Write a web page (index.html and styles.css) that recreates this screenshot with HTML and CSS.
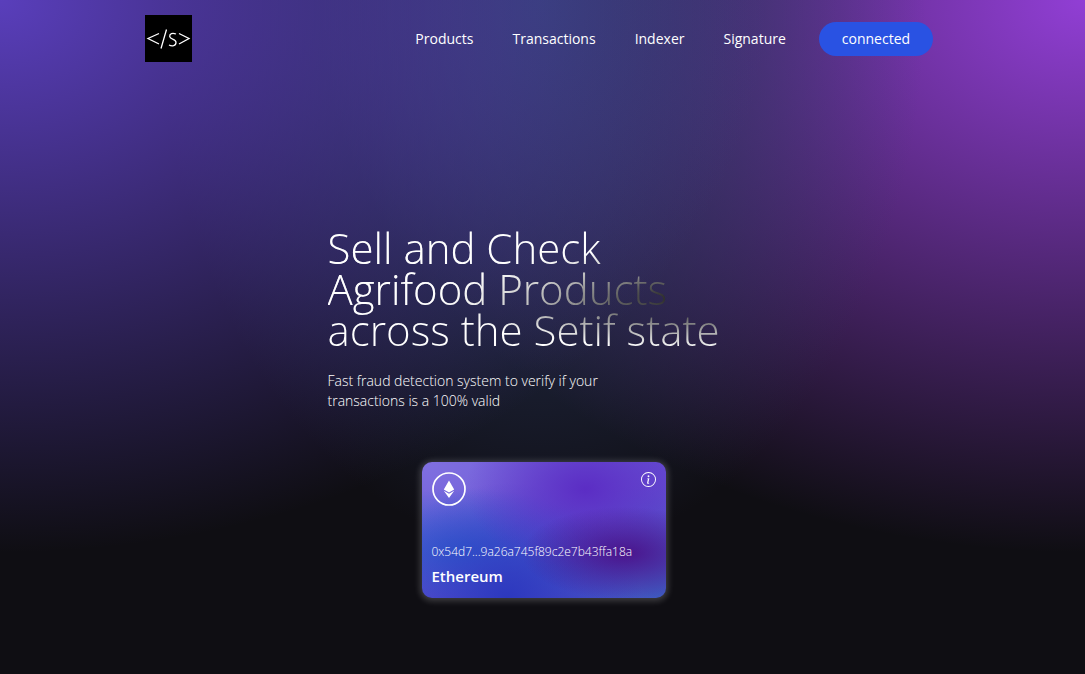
FILE: index.html
```html
<!DOCTYPE html>
<html lang="en">
<head>
  <meta charset="UTF-8" />
  <meta name="viewport" content="width=device-width, initial-scale=1.0"/>
  <title>Agrifood Products</title>
  <link rel="stylesheet" href="styles.css">
</head>
<body>
  <div class="welcome">
    <nav class="navbar">
      <a class="logo" href="#" aria-label="Home">
        <svg width="47" height="47" viewBox="0 0 47 47" fill="none" stroke="#fff" stroke-width="1.3">
          <rect width="47" height="47" fill="#000" stroke="none" />
          <path d="M14 18.500 3 23.500 14 29M21.500 14.500 16 33.500M34 18.500 44 23.500 34 29" />
          <path d="M31 19C27.500 17.500 24.500 18.500 24.700 21.500C25 25 31 23 31 27.500C31 31 27 31.500 24 30" />
        </svg>
      </a>
      <ul class="nav-links">
        <li><a href="#products">Products</a></li>
        <li><a href="#transactions">Transactions</a></li>
        <li><a href="#indexer">Indexer</a></li>
        <li><a href="#signature">Signature</a></li>
        <li><button class="connect-btn" type="button">connected</button></li>
      </ul>
    </nav>

    <main class="hero">
      <div class="hero-content">
        <h1 class="text-gradient">Sell and Check<br>Agrifood Products<br>across the Setif state</h1>
        <p class="intro">Fast fraud detection system to verify if your transactions is a 100% valid</p>

        <div class="eth-card">
          <div class="card-top">
            <svg width="34" height="34" viewBox="0 0 34 34" aria-hidden="true">
              <circle cx="17" cy="17" r="16" fill="none" stroke="#fff" stroke-width="1.700" />
              <path fill="#fff" d="M17 8.500 22.200 17.500 17 20.500 11.800 17.500ZM11.800 18.800 17 21.800 22.200 18.800 17 26Z" />
            </svg>
            <svg width="15" height="15" viewBox="0 0 16 16" fill="#fff" aria-hidden="true">
              <path d="M8 15A7 7 0 1 1 8 1a7 7 0 0 1 0 14zm0 1A8 8 0 1 0 8 0a8 8 0 0 0 0 16z" />
              <path d="m8.930 6.588-2.290.287-.082.380.450.083c.294.070.352.176.288.469l-.738 3.468c-.194.897.105 1.319.808 1.319.545 0 1.178-.252 1.465-.598l.088-.416c-.200.176-.492.246-.686.246-.275 0-.375-.193-.304-.533L8.930 6.588zM9 4.500a1 1 0 1 1-2 0 1 1 0 0 1 2 0z" />
            </svg>
          </div>
          <div>
            <p class="address">0x54d7...9a26a745f89c2e7b43ffa18a</p>
            <p class="coin">Ethereum</p>
          </div>
        </div>
      </div>
    </main>
  </div>
</body>
</html>
```
FILE: styles.css
```css
* {
  box-sizing: border-box;
  margin: 0;
  padding: 0;
}

body {
  font-family: "Open Sans", sans-serif;
  font-size: 14px;
  line-height: 20px;
  color: white;
  background: #0f0e13;
}

.welcome {
  min-height: 100vh;
  background-color: #0f0e13;
  background-image:
    radial-gradient(at 0% 0%, hsl(253, 50%, 49%) 0, transparent 50%),
    radial-gradient(at 50% 0%, hsl(225, 39%, 30%) 0, transparent 50%),
    radial-gradient(at 100% 0%, hsl(273, 64%, 54%) 0, transparent 50%);
  background-size: 100% 116%;
  background-repeat: no-repeat;
}

.navbar {
  display: flex;
  justify-content: space-between;
  align-items: center;
  padding: 15px 14% 14px 145px;
}

.logo {
  display: flex;
}

.nav-links {
  display: flex;
  align-items: center;
  gap: 39px;
  list-style: none;
}

.nav-links a {
  color: white;
  text-decoration: none;
}

.connect-btn {
  display: block;
  margin-left: -6px;
  padding: 7px 23px;
  border: none;
  border-radius: 17px;
  background: #2952e3;
  color: white;
  font: inherit;
  cursor: pointer;
}

.connect-btn:hover {
  background: #2546bd;
}

.hero {
  display: flex;
  justify-content: center;
  padding: 151px 20px 76px 22px;
}

.hero-content {
  display: flex;
  flex-direction: column;
  width: 432px;
}

.text-gradient {
  font-size: 42px;
  line-height: 41px;
  font-weight: 300;
  background-color: #fff;
  background-image:
    radial-gradient(at 4% 36%, #fff 0, transparent 53%),
    radial-gradient(at 90% 58%, #000 0, transparent 50%);
  -webkit-background-clip: text;
  background-clip: text;
  color: transparent;
}

.intro {
  max-width: 300px;
  margin-top: 21px;
  font-weight: 300;
}

.eth-card {
  display: flex;
  flex-direction: column;
  justify-content: space-between;
  align-self: center;
  width: 244px;
  height: 136px;
  margin-top: 51px;
  padding: 10px 10px 12px;
  border-radius: 10px;
  background-color: #a099ff;
  background-image:
    radial-gradient(at 83% 67%, #4a148c 0, transparent 36%),
    radial-gradient(at 67% 20%, #5b2dc4 0, transparent 52%),
    radial-gradient(at 35% 100%, #2c38be 0, transparent 60%),
    radial-gradient(at 16% 65%, #315fd0 0, transparent 50%),
    radial-gradient(at 100% 100%, #3d58be 0, transparent 60%),
    radial-gradient(at 0% 0%, #8070e0 0, #6550d2 70%);
  box-shadow: 0 1px 6px 2px rgba(255, 255, 255, 0.2);
}

.card-top {
  display: flex;
  justify-content: space-between;
  align-items: flex-start;
}

.address {
  font-size: 12px;
  font-weight: 300;
}

.coin {
  margin-top: 4px;
  font-size: 15px;
  font-weight: 600;
}
```
